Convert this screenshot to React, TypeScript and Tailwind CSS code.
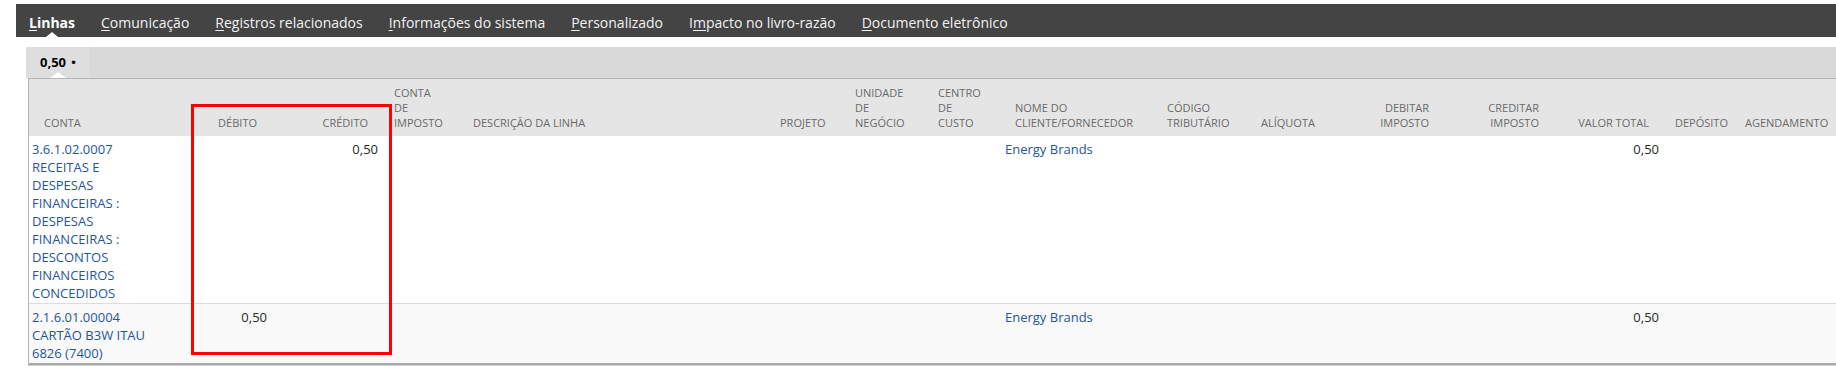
import React from 'react';

type Col = {
  label: string[];
  width: number;
  right?: boolean;
};

const columns: Col[] = [
  { label: ['Conta'], width: 138 },
  { label: ['Débito'], width: 103, right: true },
  { label: ['Crédito'], width: 111, right: true },
  { label: ['Conta', 'de', 'imposto'], width: 79 },
  { label: ['Descrição da linha'], width: 307 },
  { label: ['Projeto'], width: 75 },
  { label: ['Unidade', 'de', 'negócio'], width: 83 },
  { label: ['Centro', 'de', 'custo'], width: 77 },
  { label: ['Nome do', 'cliente/fornecedor'], width: 152 },
  { label: ['Código', 'tributário'], width: 94 },
  { label: ['Alíquota'], width: 94 },
  { label: ['Debitar', 'imposto'], width: 100, right: true },
  { label: ['Creditar', 'imposto'], width: 110, right: true },
  { label: ['Valor total'], width: 110, right: true },
  { label: ['Depósito'], width: 70 },
  { label: ['Agendamento'], width: 168 },
];

type Line = {
  conta: string[];
  debito?: string;
  credito?: string;
  nome: string;
  total: string;
};

const lines: Line[] = [
  {
    conta: [
      '3.6.1.02.0007',
      'RECEITAS E',
      'DESPESAS',
      'FINANCEIRAS :',
      'DESPESAS',
      'FINANCEIRAS :',
      'DESCONTOS',
      'FINANCEIROS',
      'CONCEDIDOS',
    ],
    credito: '0,50',
    nome: 'Energy Brands',
    total: '0,50',
  },
  {
    conta: ['2.1.6.01.00004', 'CARTÃO B3W ITAU', '6826 (7400)'],
    debito: '0,50',
    nome: 'Energy Brands',
    total: '0,50',
  },
];

const tabs = [
  { pre: '', key: 'L', rest: 'inhas', active: true },
  { pre: '', key: 'C', rest: 'omunicação' },
  { pre: '', key: 'R', rest: 'egistros relacionados' },
  { pre: '', key: 'I', rest: 'nformações do sistema' },
  { pre: '', key: 'P', rest: 'ersonalizado' },
  { pre: 'I', key: 'm', rest: 'pacto no livro-razão' },
  { pre: '', key: 'D', rest: 'ocumento eletrônico' },
];

const cell = 'px-[3px] pt-[4px] pb-[1px] align-top text-[13px] leading-[18px]';

const App: React.FC = () => {
  const tableWidth = columns.reduce((s, c) => s + c.width, 0);

  return (
    <div className="relative w-[1836px] h-[383px] bg-white overflow-hidden font-['Open_Sans',sans-serif]">
      {/* top tabs */}
      <div className="pt-[4px] pl-[16px]">
        <div className="h-[33px] bg-[#444444] flex items-center pl-[13px] gap-[26px] text-[14px] text-[#f2f2f2]">
          {tabs.map((t) => (
            <div
              key={t.key + t.rest}
              className={`relative h-full flex items-center pt-[3px] whitespace-nowrap ${t.active ? 'font-bold text-white' : ''}`}
            >
              <span>
                {t.pre}
                <u className="underline-offset-[2px]">{t.key}</u>
                {t.rest}
              </span>
              {t.active && (
                <span className="absolute bottom-0 left-1/2 -translate-x-1/2 w-0 h-0 border-l-[6px] border-r-[6px] border-b-[5px] border-l-transparent border-r-transparent border-b-white" />
              )}
            </div>
          ))}
        </div>
      </div>

      <div className="mt-[10px] ml-[26px]">
        {/* sub tab bar */}
        <div className="h-[31px] bg-[#d9d9d9] flex">
          <div className="relative h-full bg-[#dedede] pl-[14px] pr-[12px] flex items-center text-[13px] text-black">
            <span className="font-bold">0,50</span>
            <span className="ml-[4px] text-[12px] leading-none font-['DejaVu_Sans',sans-serif]">•</span>
            <span className="absolute bottom-0 left-1/2 -translate-x-1/2 w-0 h-0 border-l-[8px] border-r-[8px] border-b-[6px] border-l-transparent border-r-transparent border-b-white" />
          </div>
        </div>

        {/* table */}
        <div className="ml-[2px] border-l border-t border-[#b4b4b4] overflow-hidden">
          <table className="table-fixed border-collapse" style={{ width: tableWidth }}>
            <colgroup>
              {columns.map((c, i) => (
                <col key={i} style={{ width: c.width }} />
              ))}
            </colgroup>
            <thead>
              <tr className="bg-[#e5e5e5]">
                {columns.map((c, i) => (
                  <th
                    key={i}
                    className={`${i === 0 ? 'pl-[15px] pr-[13px]' : 'px-[13px]'} pt-[6px] pb-[6px] align-bottom text-[11px] leading-[15px] font-normal uppercase text-[#6a6a6a] whitespace-nowrap ${c.right ? 'text-right' : 'text-left'}`}
                  >
                    {c.label.map((l, j) => (
                      <div key={j}>{l}</div>
                    ))}
                  </th>
                ))}
              </tr>
            </thead>
            <tbody>
              {lines.map((ln, idx) => (
                <tr
                  key={idx}
                  className={idx === 0 ? 'bg-white' : 'bg-[#f9f9f9] border-t border-[#dcdcdc]'}
                >
                  <td className={`${cell} text-[#255599]`}>
                    {ln.conta.map((c, j) => (
                      <div key={j} className="whitespace-nowrap">{c}</div>
                    ))}
                  </td>
                  <td className={`${cell} text-right text-[#262626]`}>{ln.debito}</td>
                  <td className={`${cell} text-right text-[#262626]`}>{ln.credito}</td>
                  <td />
                  <td />
                  <td />
                  <td />
                  <td />
                  <td className={`${cell} text-[#255599] whitespace-nowrap`}>{ln.nome}</td>
                  <td />
                  <td />
                  <td />
                  <td />
                  <td className={`${cell} text-right text-[#262626]`}>{ln.total}</td>
                  <td />
                  <td />
                </tr>
              ))}
            </tbody>
          </table>
          <div className="h-[2px] bg-[#a8a8a8]" />
          <div className="h-px bg-[#d2d2d2]" />
        </div>
      </div>

      {/* highlight box */}
      <div className="absolute left-[191px] top-[104px] w-[201px] h-[251px] border-[3px] border-[#ff0000]" />
    </div>
  );
};

export default App;
